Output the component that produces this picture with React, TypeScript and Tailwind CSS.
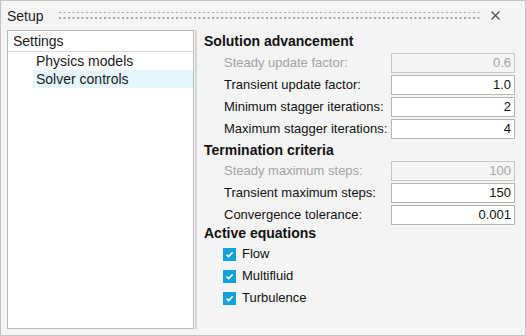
import React from "react";

const rowsA = [
  { label: "Steady update factor:", value: "0.6", disabled: true },
  { label: "Transient update factor:", value: "1.0" },
  { label: "Minimum stagger iterations:", value: "2" },
  { label: "Maximum stagger iterations:", value: "4" },
];

const rowsB = [
  { label: "Steady maximum steps:", value: "100", disabled: true },
  { label: "Transient maximum steps:", value: "150" },
  { label: "Convergence tolerance:", value: "0.001" },
];

const equations = ["Flow", "Multifluid", "Turbulence"];

function Field({ label, value, disabled }: { label: string; value: string; disabled?: boolean }) {
  return (
    <div className="flex items-center h-[20px] pl-[20px]">
      <span className={`flex-1 text-[13px] ${disabled ? "text-[#a3a3a3]" : "text-[#111]"}`}>{label}</span>
      <div
        className={`w-[124px] h-[20px] border flex items-center justify-end pr-[3px] text-[13px] ${
          disabled ? "border-[#c6c6c6] bg-[#f4f4f4] text-[#a3a3a3]" : "border-[#b4b4b4] bg-white text-[#111]"
        }`}
      >
        {value}
      </div>
    </div>
  );
}

function Check({ label }: { label: string }) {
  return (
    <div className="flex items-center h-[20px] pl-[19px] gap-[6px]">
      <span className="w-[13px] h-[13px] bg-[#10a2e0] flex items-center justify-center">
        <svg width="9" height="9" viewBox="0 0 9 9">
          <path d="M1.5 4.6 L3.6 6.6 L7.6 2.4" fill="none" stroke="white" strokeWidth="1.6" />
        </svg>
      </span>
      <span className="text-[13px] text-[#111]">{label}</span>
    </div>
  );
}

export default function App() {
  return (
    <div
      className="w-[526px] h-[336px] border border-[#c2c2c2] bg-[#f4f4f4] flex flex-col"
      style={{ fontFamily: '"Liberation Sans", Arial, sans-serif' }}
    >
      <div className="h-[29px] flex items-center pl-[6px] pr-[25px]">
        <span className="text-[14px] text-[#1a1a1a] pt-[1px]">Setup</span>
        <svg className="ml-[15px] flex-1" height="9">
          <defs>
            <pattern id="grip" width="4.5" height="6" patternUnits="userSpaceOnUse">
              <rect x="0" y="0" width="2" height="2" fill="#a4a4a4" />
            </pattern>
          </defs>
          <rect x="0" y="1" width="100%" height="8" fill="url(#grip)" />
        </svg>
        <svg className="ml-[10px]" width="9" height="9" viewBox="0 0 9 9">
          <path d="M0.5 0.5 L8.5 8.5 M8.5 0.5 L0.5 8.5" stroke="#4a4a4a" strokeWidth="1.2" />
        </svg>
      </div>
      <div className="flex-1 flex pl-[6px] pb-[6px]">
        <div className="w-[187px] border border-[#b9b9b9] bg-white flex flex-col">
          <div className="h-[21px] border-b border-[#dcdcdc] flex items-center pl-[5px] text-[14px] text-[#1a1a1a]">
            Settings
          </div>
          <div className="h-[18px] flex items-center pl-[28px] text-[14px] text-[#1a1a1a]">Physics models</div>
          <div className="h-[18px] ml-[25px] bg-[#e4f5fc] flex items-center pl-[3px] text-[14px] text-[#1a1a1a]">
            Solver controls
          </div>
        </div>
        <div className="w-[2px] ml-[1px] bg-[#d6d6d6]" />
        <div className="flex-1 pl-[7px] pr-[10px] flex flex-col">
          <div className="h-[23px] flex items-end text-[14px] font-bold text-[#111] pb-[1px]">Solution advancement</div>
          <div className="flex flex-col gap-[2px]">
            {rowsA.map((r) => (
              <Field key={r.label} {...r} />
            ))}
          </div>
          <div className="h-[22px] flex items-center text-[14px] font-bold text-[#111]">Termination criteria</div>
          <div className="flex flex-col gap-[2px]">
            {rowsB.map((r) => (
              <Field key={r.label} {...r} />
            ))}
          </div>
          <div className="h-[19px] flex items-end text-[14px] font-bold text-[#111]">Active equations</div>
          <div className="flex flex-col gap-[2px]">
            {equations.map((e) => (
              <Check key={e} label={e} />
            ))}
          </div>
        </div>
      </div>
    </div>
  );
}
